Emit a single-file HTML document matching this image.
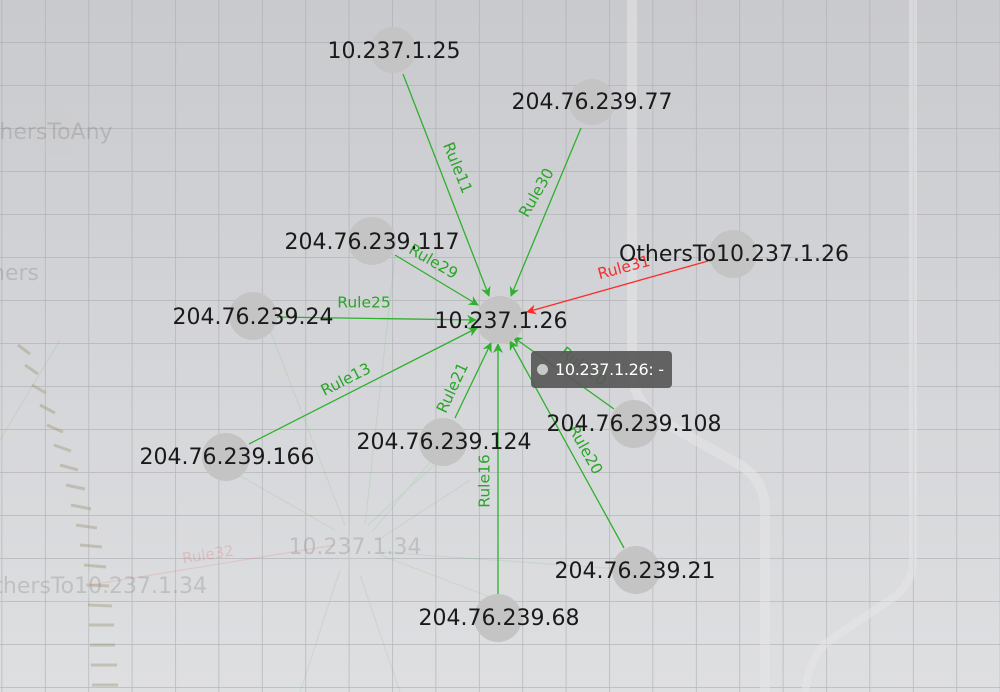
<!DOCTYPE html>
<html><head><meta charset="utf-8"><style>
html,body{margin:0;padding:0;width:1000px;height:692px;overflow:hidden}
body{background:linear-gradient(#c9cacd,#d6d7da 60%,#dedfe1);font-family:"DejaVu Sans","Liberation Sans",sans-serif}
svg{position:absolute;left:0;top:0}
.n{fill:#c4c4c4}
.t{font-size:22px;fill:#1a1a1a;text-anchor:middle;dominant-baseline:middle;font-family:"DejaVu Sans",sans-serif}
.g{stroke:#2fb02f;stroke-width:1.3;fill:none}
.gl{font-size:15.5px;fill:#2aa52a;text-anchor:middle;dominant-baseline:middle;font-family:"DejaVu Sans",sans-serif}
.tip{position:absolute;left:531px;top:351px;width:141px;height:37px;background:rgba(88,88,88,.92);border-radius:4px;color:#fff;font-size:16px;line-height:37px;box-sizing:border-box;padding-left:24px;white-space:nowrap;letter-spacing:-0.3px}
.tip:before{content:"";position:absolute;left:6px;top:13px;width:11px;height:11px;border-radius:50%;background:#c9c9c9}
</style></head><body>
<svg width="1000" height="692" viewBox="0 0 1000 692">
<defs>
<pattern id="grid" width="43.4" height="43" patternUnits="userSpaceOnUse" x="1.5" y="-1">
<path d="M0 0V43M0 0H43.4" stroke="#a9aaae" stroke-width="1.5" fill="none"/>
</pattern>
<marker id="ag" markerWidth="10" markerHeight="10" refX="9" refY="5" orient="auto" markerUnits="userSpaceOnUse"><path d="M0 0L10 5L0 10L3 5Z" fill="#2fb02f"/></marker>
<marker id="ar" markerWidth="10" markerHeight="10" refX="9" refY="5" orient="auto" markerUnits="userSpaceOnUse"><path d="M0 0L10 5L0 10L3 5Z" fill="#ff2a2a"/></marker>
</defs>
<rect width="1000" height="692" fill="url(#grid)" opacity=".75"/>
<path d="M632 0V370Q632 400 660 420L740 465Q765 480 765 510V692" stroke="#e6e6e8" stroke-width="10" fill="none" opacity=".55"/>
<path d="M913 0V560Q913 585 890 600L830 640Q810 655 805 692" stroke="#e6e6e8" stroke-width="8" fill="none" opacity=".55"/>
<g stroke="#a29d80" stroke-width="3" opacity=".45">
<path d="M18 345l12 9M25 365l13 9M32 385l14 8M40 405l15 8M47 425l16 7M54 445l17 6M60 465l18 5M66 485l19 4M71 505l20 4M76 525l21 3M80 545l22 2M84 565l22 2M86 585l23 1M88 605l24 1M89 625l25 0M90 645l25 0M91 665l26 0M92 685l26 0"/>
</g>
<g opacity=".1" stroke="#2fb02f" stroke-width="1.2">
<path d="M270 330L345 525M230 470L335 530M60 340L0 440M440 450L372 532M498 600L380 555M470 480L378 540M635 570L380 552M395 255L365 525M440 460L368 525M300 692L340 570M400 692L360 575"/>
</g>
<path d="M90 585L335 545" stroke="#ff4a4a" stroke-width="1.2" opacity=".15"/>
<g opacity=".2">
<circle cx="355" cy="548" r="24" fill="#ddd"/><circle cx="68" cy="585" r="24" fill="#ddd"/><circle cx="57" cy="133" r="24" fill="#ccc"/>
</g>
<g opacity=".2" style="font-family:'DejaVu Sans',sans-serif;font-size:22px;fill:#555;text-anchor:middle;dominant-baseline:middle">
<text x="355" y="548">10.237.1.34</text>
<text x="92" y="587">OthersTo10.237.1.34</text>
<text x="43" y="133">OthersToAny</text>
<text x="2" y="274">Others</text>
<text x="208" y="555" style="font-size:15px;fill:#e44" transform="rotate(-9 208 555)">Rule32</text>
</g>
<g class="g">
<path d="M403 74L489 296" marker-end="url(#ag)"/>
<path d="M581 128L511 296" marker-end="url(#ag)"/>
<path d="M395 255L478 305" marker-end="url(#ag)"/>
<path d="M276 317L476 320" marker-end="url(#ag)"/>
<path d="M249 444L477 328" marker-end="url(#ag)"/>
<path d="M455 418L491 343" marker-end="url(#ag)"/>
<path d="M498 594L498 344" marker-end="url(#ag)"/>
<path d="M614 409L513 337" marker-end="url(#ag)"/>
<path d="M624 548L510 341" marker-end="url(#ag)"/>
</g>
<path d="M708 261L527 312" stroke="#ff2a2a" stroke-width="1.3" marker-end="url(#ar)"/>
<g>
<circle class="n" cx="393" cy="50" r="23"/><circle class="n" cx="592" cy="102" r="23"/>
<circle class="n" cx="372" cy="241" r="24"/><circle class="n" cx="253" cy="316" r="24"/>
<circle class="n" cx="500" cy="320" r="24"/><circle class="n" cx="733" cy="254" r="24"/>
<circle class="n" cx="226" cy="457" r="24"/><circle class="n" cx="443" cy="442" r="24"/>
<circle class="n" cx="634" cy="424" r="24"/><circle class="n" cx="636" cy="570" r="24"/>
<circle class="n" cx="498" cy="618" r="24"/>
</g>
<g class="gl">
<text x="457" y="168" transform="rotate(68 457 168)">Rule11</text>
<text x="537" y="193" transform="rotate(-60 537 193)">Rule30</text>
<text x="433" y="262" transform="rotate(30 433 262)">Rule29</text>
<text x="364" y="303">Rule25</text>
<text x="346" y="380" transform="rotate(-27 346 380)">Rule13</text>
<text x="453" y="388" transform="rotate(-65 453 388)">Rule21</text>
<text x="485" y="481" transform="rotate(-90 485 481)">Rule16</text>
<text x="583" y="367" transform="rotate(37 583 367)">Rule10</text>
<text x="585" y="450" transform="rotate(61 585 450)">Rule20</text>
<text x="624" y="268" transform="rotate(-15 624 268)" style="fill:#f03030">Rule31</text>
</g>
<g class="t">
<text x="394" y="52">10.237.1.25</text>
<text x="592" y="103">204.76.239.77</text>
<text x="372" y="243">204.76.239.117</text>
<text x="253" y="318">204.76.239.24</text>
<text x="501" y="322">10.237.1.26</text>
<text x="734" y="255">OthersTo10.237.1.26</text>
<text x="227" y="458">204.76.239.166</text>
<text x="444" y="443">204.76.239.124</text>
<text x="634" y="425">204.76.239.108</text>
<text x="635" y="572">204.76.239.21</text>
<text x="499" y="619">204.76.239.68</text>
</g>
</svg>
<div class="tip">10.237.1.26: -</div>
</body></html>
